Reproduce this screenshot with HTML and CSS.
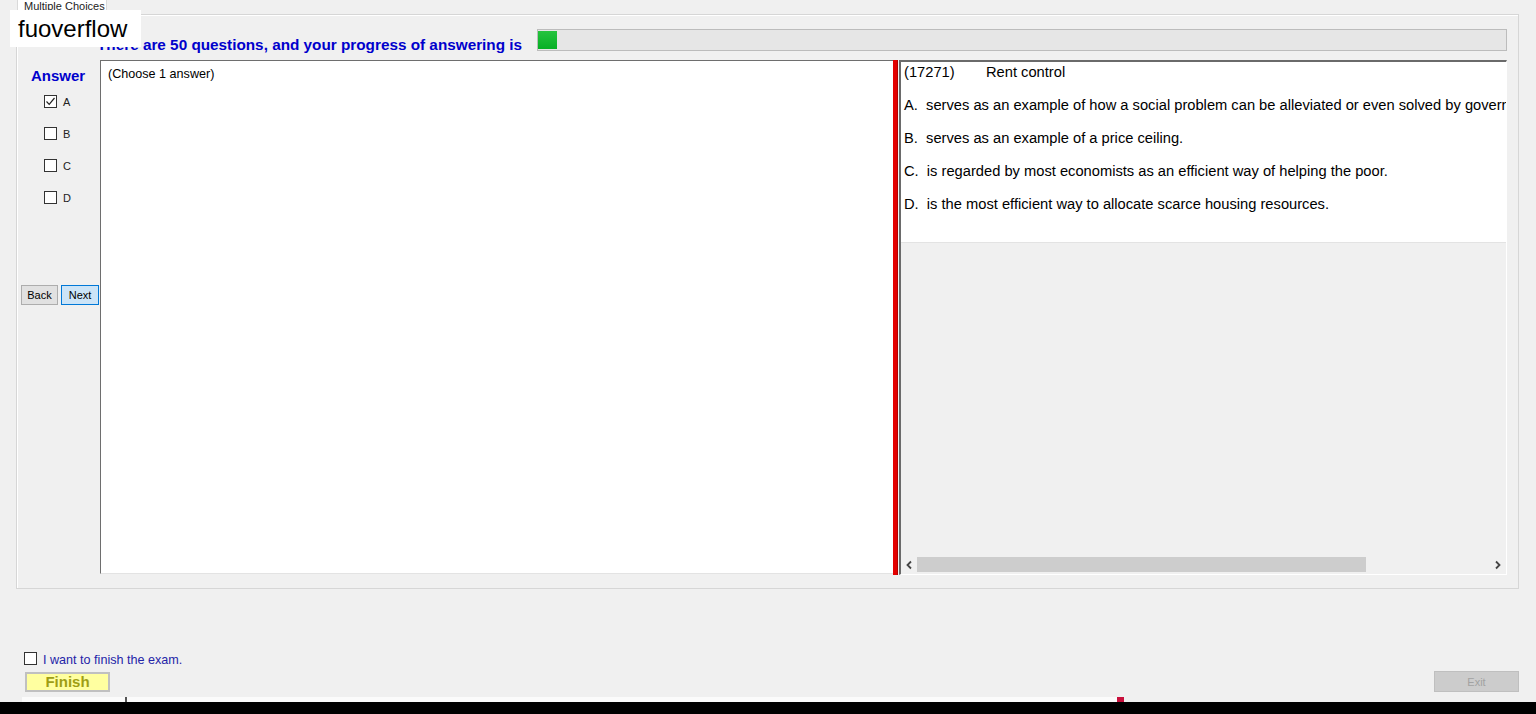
FILE: index.html
```html
<!DOCTYPE html>
<html lang="en">
<head>
    <meta charset="UTF-8">
    <meta name="viewport" content="width=device-width, initial-scale=1.0">
    <title>Multiple Choices</title>
    <link rel="stylesheet" href="styles.css">
</head>
<body>
    <div class="tabs">
        <span class="tab">Multiple Choices</span>
    </div>

    <div class="tab-page">
        <div class="progress-row">
            <span class="progress-text">There are 50 questions, and your progress of answering is</span>
            <div class="progress"><div class="progress-fill" style="width: 19px"></div></div>
        </div>

        <div class="work">
            <!-- Answer checkboxes + navigation -->
            <div class="answer-col">
                <div class="answer-title">Answer</div>
                <label class="opt">
                    <span class="box">
                        <svg width="11" height="11" viewBox="0 0 11 11"><path d="M1.5 5.5 L4.2 8.3 L9.5 2" fill="none" stroke="#222" stroke-width="1.2"/></svg>
                    </span>A
                </label>
                <label class="opt"><span class="box"></span>B</label>
                <label class="opt"><span class="box"></span>C</label>
                <label class="opt"><span class="box"></span>D</label>
                <div class="nav">
                    <button class="btn">Back</button>
                    <button class="btn btn-focus">Next</button>
                </div>
            </div>

            <div class="question-pane">(Choose 1 answer)</div>
            <div class="splitter"></div>

            <div class="options-pane">
                <div class="options-text">
                    <div class="line"><span class="qid">(17271)</span>Rent control</div>
                    <div class="line">A.&nbsp; serves as an example of how a social problem can be alleviated or even solved by government intervention.</div>
                    <div class="line">B.&nbsp; serves as an example of a price ceiling.</div>
                    <div class="line">C.&nbsp; is regarded by most economists as an efficient way of helping the poor.</div>
                    <div class="line">D.&nbsp; is the most efficient way to allocate scarce housing resources.</div>
                </div>
                <div class="hscroll">
                    <span class="arrow">
                        <svg width="8" height="10" viewBox="0 0 8 10"><path d="M6 1.5 L2.5 5 L6 8.5" fill="none" stroke="#444" stroke-width="1.8"/></svg>
                    </span>
                    <div class="track"><div class="thumb"></div></div>
                    <span class="arrow">
                        <svg width="8" height="10" viewBox="0 0 8 10"><path d="M2 1.5 L5.5 5 L2 8.5" fill="none" stroke="#444" stroke-width="1.8"/></svg>
                    </span>
                </div>
            </div>
        </div>
    </div>

    <div class="footer">
        <div class="finish-col">
            <label class="finish-check"><span class="box"></span><span class="finish-label">I want to finish the exam.</span></label>
            <button class="btn-finish">Finish</button>
        </div>
        <button class="btn-exit" disabled>Exit</button>
    </div>

    <div class="taskbar">
        <div class="strip"><span class="strip-white"></span><span class="tick"></span><span class="strip-white long"></span><span class="red-mark"></span></div>
        <div class="black"></div>
    </div>

    <div class="watermark">fuoverflow</div>
</body>
</html>
```

FILE: styles.css
```css
/* Page frame */
body {
    margin: 0;
    height: 714px;
    overflow: hidden;
    background: #f0f0f0;
    font-family: 'Liberation Sans', Arial, sans-serif;
    color: #000;
    display: flex;
    flex-direction: column;
    position: relative;
}

/* Tab header */
.tabs {
    height: 14px;
    padding-left: 17px;
    display: flex;
}

.tab {
    height: 15px;
    width: 90px;
    padding-left: 6px;
    box-sizing: border-box;
    background: #fff;
    border: 1px solid #d9d9d9;
    border-top: none;
    border-bottom: none;
    font-size: 11px;
    line-height: 12px;
    white-space: nowrap;
    color: #222;
    position: relative;
    z-index: 1;
}

.tab-page {
    margin-left: 16px;
    width: 1503px;
    height: 575px;
    box-sizing: border-box;
    border: 1px solid #d6d6d6;
    box-shadow: inset 1px 1px 0 #fff;
    display: flex;
    flex-direction: column;
}

/* Progress header */
.progress-row {
    display: flex;
    align-items: center;
    margin-top: 14px;
    height: 22px;
    padding-left: 80px;
}

.progress-text {
    width: 440px;
    flex-shrink: 0;
    font-size: 15.3px;
    font-weight: bold;
    white-space: nowrap;
    color: #0000cc;
    margin-top: 9px;
}

.progress {
    width: 970px;
    height: 22px;
    box-sizing: border-box;
    background: #e6e6e6;
    border: 1px solid #bcbcbc;
    padding: 1px 0 1px 0;
}

.progress-fill {
    height: 100%;
    background: linear-gradient(#26c33e, #06b025);
}

/* Work area */
.work {
    display: flex;
    margin-top: 9px;
    height: 515px;
}

.answer-col {
    width: 83px;
    flex-shrink: 0;
    display: flex;
    flex-direction: column;
}

.answer-title {
    font-size: 15px;
    font-weight: bold;
    color: #0000cc;
    padding: 8px 0 0 14px;
    line-height: 16px;
    height: 27px;
}

.opt {
    display: flex;
    align-items: center;
    gap: 6px;
    height: 13px;
    margin: 0 0 19px 27px;
    font-size: 11px;
    color: #222;
}

.box {
    width: 13px;
    height: 13px;
    box-sizing: border-box;
    border: 1px solid #333;
    background: #fff;
    display: flex;
    align-items: center;
    justify-content: center;
    flex-shrink: 0;
}

.nav {
    display: flex;
    gap: 3px;
    margin: 62px 0 0 4px;
}

.btn {
    width: 37px;
    height: 20px;
    padding: 0;
    font-family: inherit;
    font-size: 11px;
    color: #000;
    background: #e1e1e1;
    border: 1px solid #adadad;
}

.btn-focus {
    width: 38px;
    background: #cce4f7;
    border-color: #0078d7;
}

.question-pane {
    width: 793px;
    flex-shrink: 0;
    height: 514px;
    box-sizing: border-box;
    background: #fff;
    border-left: 1px solid #6e6e6e;
    border-top: 1px solid #6e6e6e;
    border-bottom: 1px solid #e3e3e3;
    padding: 6px 0 0 7px;
    font-size: 12.6px;
    line-height: 14px;
}

.splitter {
    width: 5px;
    flex-shrink: 0;
    height: 515px;
    background: #e30000;
    box-shadow: inset -1px 0 0 #b00000;
}

/* Right pane with the question text */
.options-pane {
    width: 608px;
    flex-shrink: 0;
    box-sizing: border-box;
    border-top: 2px solid #6a6a6a;
    border-left: 2px solid #6a6a6a;
    border-right: 1px solid #fff;
    border-bottom: 1px solid #fff;
    margin-left: 1px;
    display: flex;
    flex-direction: column;
    padding-bottom: 1px;
}

.options-text {
    height: 181px;
    box-sizing: border-box;
    background: #fff;
    border-bottom: 1px solid #e3e3e3;
    padding: 2px 0 0 3px;
    overflow: hidden;
    white-space: nowrap;
    font-size: 14.7px;
}

.line {
    height: 33px;
    line-height: 16px;
}

.qid {
    display: inline-block;
    width: 82px;
}

.hscroll {
    margin-top: auto;
    height: 17px;
    display: flex;
    background: #f0f0f0;
}

.arrow {
    width: 16px;
    display: flex;
    align-items: center;
    justify-content: center;
    flex-shrink: 0;
}

.track {
    flex: 1;
    padding: 1px 0;
}

.thumb {
    width: 449px;
    height: 100%;
    background: #cdcdcd;
}

/* Bottom controls */
.footer {
    display: flex;
    justify-content: space-between;
    align-items: flex-end;
    margin-top: 63px;
    padding: 0 17px 0 24px;
}

.finish-col {
    display: flex;
    flex-direction: column;
    gap: 7px;
}

.finish-check {
    display: flex;
    align-items: center;
    gap: 6px;
    font-size: 12.6px;
    color: #2424a8;
    height: 13px;
}

.finish-label {
    margin-top: 3px;
}

.btn-finish {
    margin-left: 1px;
    width: 85px;
    height: 20px;
    padding: 0;
    background: #ffffa0;
    border: 2px solid #c0c0c0;
    font-family: inherit;
    font-size: 15px;
    line-height: 16px;
    font-weight: bold;
    color: #9e9e14;
}

.btn-exit {
    width: 85px;
    height: 21px;
    padding: 0;
    background: #cccccc;
    border: 1px solid #bfbfbf;
    font-family: inherit;
    font-size: 11px;
    color: #a2a2a2;
}

.taskbar {
    margin-top: auto;
}

.strip {
    height: 5px;
    display: flex;
    padding-left: 22px;
}

.strip-white {
    width: 103px;
    background: #fbfbfb;
}

.strip-white.long {
    width: 990px;
}

.tick {
    width: 2px;
    background: #555;
}

.red-mark {
    width: 7px;
    background: #c8103c;
}

.black {
    height: 12px;
    background: #000;
}

/* Overlay label in the corner */
.watermark {
    position: absolute;
    left: 10px;
    top: 10px;
    width: 131px;
    height: 37px;
    box-sizing: border-box;
    padding-left: 8px;
    background: #fff;
    font-size: 24px;
    line-height: 37px;
    color: #000;
    z-index: 2;
}
```
